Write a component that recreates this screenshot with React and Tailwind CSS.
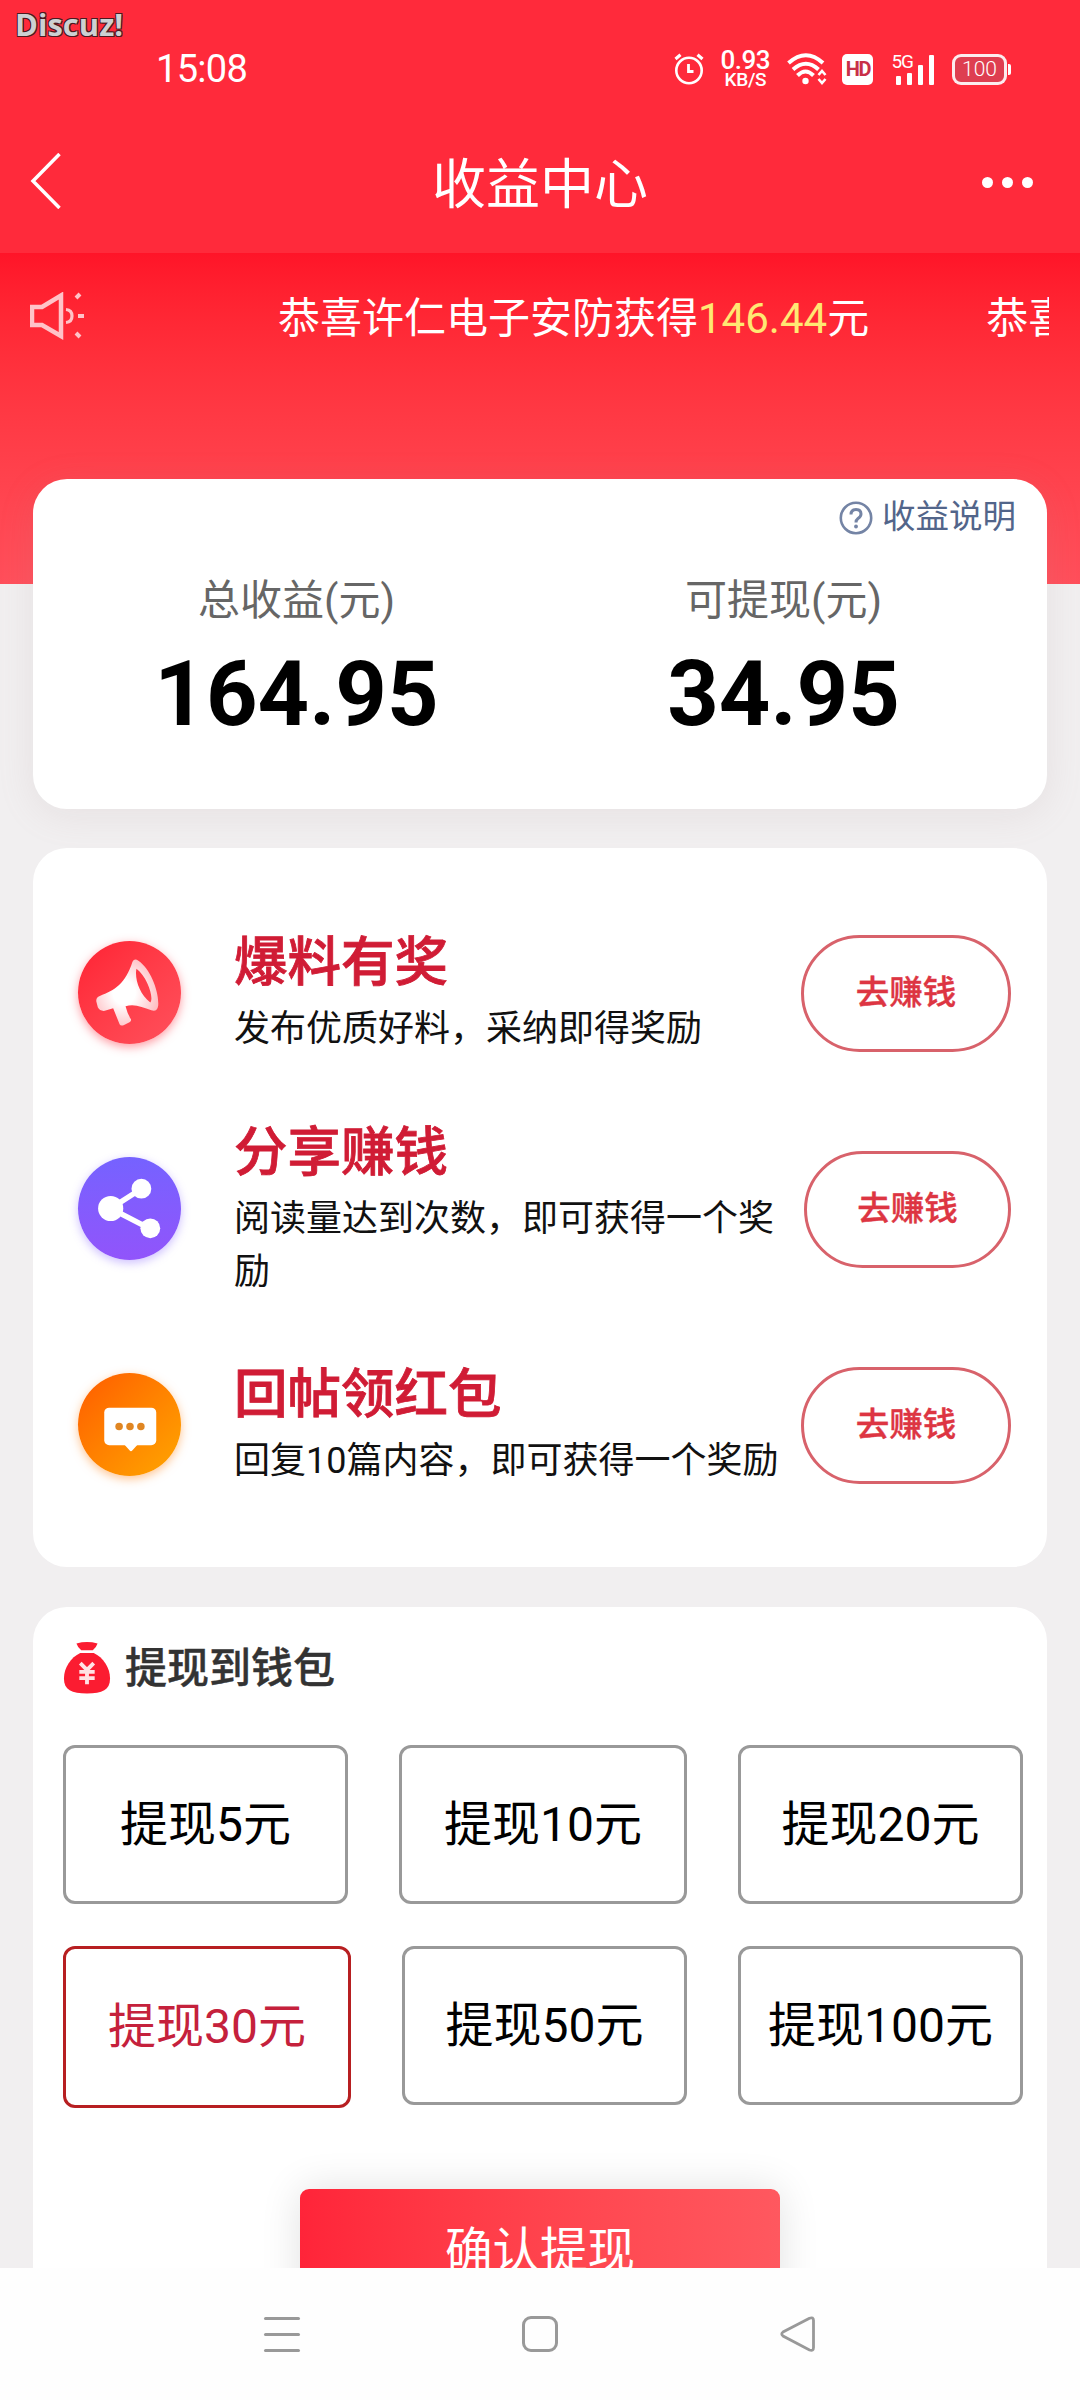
const tasks = [
  { id: 'news', icon: MegaphoneIcon, title: '爆料有奖', desc: '发布优质好料，采纳即得奖励' },
  { id: 'share', icon: ShareIcon, title: '分享赚钱', desc: '阅读量达到次数，即可获得一个奖励' },
  { id: 'reply', icon: ChatIcon, title: '回帖领红包', desc: '回复10篇内容，即可获得一个奖励' },
]

const amountRows = [
  [
    { value: 5, size: 'w-[285px] h-[159px]' },
    { value: 10, size: 'w-[288px] h-[159px]' },
    { value: 20, size: 'w-[285px] h-[159px]' },
  ],
  [
    { value: 30, size: 'w-[288px] h-[162px]' },
    { value: 50, size: 'w-[285px] h-[159px]' },
    { value: 100, size: 'w-[285px] h-[159px]' },
  ],
]

function MegaphoneIcon() {
  return (
    <div className="size-[103px] rounded-full bg-linear-to-br from-[#ff2033] to-[#ff505c] shadow-[0_3px_10px_rgba(255,60,75,0.5)]">
      <svg viewBox="0 0 104 104" className="size-full">
        <defs>
          <radialGradient id="horn" cx="0.45" cy="0.5" r="0.6">
            <stop offset="0.3" stopColor="#fff" />
            <stop offset="1" stopColor="#ffb9be" />
          </radialGradient>
        </defs>
        <path
          fill="url(#horn)"
          fillRule="evenodd"
          d="M55 21 Q57 17 61 20 C73 28 82 51 81 65 Q80 72 74 70 C65 67 57 63 48 66 Q50 74 53.500 79 Q54 81 52 82 L46 85 Q43 86 42 84 L35.500 68 L27 70.500 Q22 71 20 67 L18.500 61 Q18 57 22 55.500 C37 50 48 43 55 21 Z M59 28 C57 38 62 54 73 62 C77 58 70 36 59 28 Z"
        />
      </svg>
    </div>
  )
}

function ShareIcon() {
  return (
    <div className="size-[103px] rounded-full bg-linear-to-b from-[#7562ff] to-[#9154fb] shadow-[0_3px_10px_rgba(130,95,255,0.4)]">
      <svg viewBox="0 0 104 104" className="size-full" fill="#fff">
        <path d="M64 32 L33 52 L72 72" fill="none" stroke="#fff" strokeWidth="5.500" />
        <circle cx="33" cy="52" r="12.700" />
        <circle cx="64" cy="32" r="10" />
        <circle cx="73" cy="72" r="10" />
      </svg>
    </div>
  )
}

function ChatIcon() {
  return (
    <div className="size-[103px] rounded-full bg-linear-to-br from-[#ff5a00] to-[#ffa500] shadow-[0_3px_10px_rgba(255,140,40,0.5)]">
      <svg viewBox="0 0 104 104" className="size-full">
        <rect x="26.500" y="35" width="52.500" height="38" rx="5" fill="#fff" />
        <path d="M46.500 72 L52 78 Q53.500 80 55 78 L60.500 72 Z" fill="#fff" />
        <g fill="#e08622">
          <circle cx="41.500" cy="54" r="3.800" />
          <circle cx="52.500" cy="54" r="3.800" />
          <circle cx="63.500" cy="54" r="3.800" />
        </g>
      </svg>
    </div>
  )
}

function StatusBar() {
  return (
    <div className="flex h-[114px] items-center justify-between pt-6 pr-[69px] pl-[156px] text-white">
      <span className="text-[38px] leading-none tracking-[-0.7px]">15:08</span>
      <div className="flex h-[36px] items-center">
        {/* alarm */}
        <svg width="30" height="32" viewBox="0 0 30 32" fill="none" stroke="#fff" strokeWidth="2.600">
          <circle cx="15" cy="17.500" r="12.700" />
          <path d="M14.500 11 V18.500 H19.500" strokeWidth="2.800" />
          <path d="M1.500 6 L6.500 1.800 M23.500 1.800 L28.500 6" strokeWidth="3.200" />
        </svg>
        <div className="ml-[16px] flex w-[50px] flex-col items-center font-medium">
          <span className="text-[26px] leading-[22px] tracking-[-0.5px]">0.93</span>
          <span className="text-[19px] leading-[18px] tracking-[-0.3px]">KB/S</span>
        </div>
        {/* wifi */}
        <svg className="ml-[17px]" width="40" height="32" viewBox="0 0 40 32" fill="none" stroke="#fff">
          <path d="M1.500 10 Q19 -5.500 36 10" strokeWidth="4" />
          <path d="M6 16.500 Q19 5 31.500 16.500" strokeWidth="4" />
          <path d="M10.500 22.500 Q18.500 14.500 26.500 22.500" strokeWidth="4" />
          <circle cx="18.500" cy="28" r="3.200" fill="#fff" stroke="none" />
          <path d="M31.500 22 L35 18 L38.500 22 M31.500 26 L35 30 L38.500 26" strokeWidth="2.600" />
        </svg>
        <div className="ml-[15px] flex size-[31px] items-center justify-center rounded-[5px] bg-white text-[20px] leading-none font-bold tracking-[-1.500px] text-[#c83048]">
          HD
        </div>
        <div className="ml-[18px] flex h-[31px] items-end">
          <span className="-mr-[17px] self-start text-[19px] leading-[15px] tracking-[-1px]">5G</span>
          <div className="flex items-end gap-[6px]">
            <i className="h-[9px] w-[5px] rounded-[1px] bg-white" />
            <i className="h-[12px] w-[5px] rounded-[1px] bg-white" />
            <i className="h-[20px] w-[5px] rounded-[1px] bg-white" />
            <i className="h-[30px] w-[5px] rounded-[1px] bg-white" />
          </div>
        </div>
        <div className="ml-[18px] flex h-[31px] w-[55px] items-center justify-center rounded-[9px] border-3 border-white/90 bg-[#de3e50] text-[21px] leading-none font-light text-white">
          100
        </div>
        <i className="ml-px h-[11px] w-[3px] rounded-r-[2px] bg-white" />
      </div>
    </div>
  )
}

function TitleBar() {
  return (
    <div className="flex h-[139px] items-center justify-between pr-[47px] pl-[30px]">
      <svg className="mb-[6px]" width="77" height="56" viewBox="0 0 77 56" fill="none" stroke="#fff" strokeWidth="3.500">
        <path d="M29.500 1 L3 28 L29.500 55" />
      </svg>
      <h1 className="pt-[5px] text-[54px] leading-[80px] text-white">收益中心</h1>
      <div className="mb-[3px] flex w-[60px] justify-end gap-[9px]">
        <i className="size-[11px] rounded-full bg-white" />
        <i className="size-[11px] rounded-full bg-white" />
        <i className="size-[11px] rounded-full bg-white" />
      </div>
    </div>
  )
}

function Marquee() {
  return (
    <div className="flex h-[128px] items-center pr-[31px] pl-[30px]">
      <svg className="mb-[3px] shrink-0" width="55" height="48" viewBox="0 0 55 48" fill="none" stroke="#ffc3c8" strokeWidth="3.200">
        <path d="M2 15 H12 L31 3.500 V44 L12 33 H2 Z" strokeWidth="4.500" />
        <path d="M36 17.500 Q42 18 42 24 Q42 30 36 30.500" />
        <path d="M46 6 L50 2 M48 24 H54 M46 41 L50 45" strokeWidth="4" />
      </svg>
      <div className="ml-[193px] flex flex-1 gap-[117px] overflow-hidden pt-[3px] text-[42px] leading-[62px] whitespace-nowrap text-white">
        <span className="shrink-0">
          恭喜许仁电子安防获得<span className="text-[#ffe873]">146.44</span>元
        </span>
        <span>恭喜</span>
      </div>
    </div>
  )
}

function Balance({ label, value }) {
  return (
    <div className="flex flex-1 flex-col items-center">
      <span className="text-[42px] leading-[60px] text-[#666]">{label}</span>
      <span className="mt-[9px] text-[90px] leading-[110px] font-bold text-black">{value}</span>
    </div>
  )
}

function MoneyBag() {
  return (
    <svg width="48" height="54" viewBox="0 0 50 56">
      <path d="M14 2.500 Q25 -0.500 36 2.500 Q35 6 31 9.500 H19 Q15 6 14 2.500 Z" fill="#fb1c31" />
      <path d="M18 12.500 H32 C42 17 49 28 49 39 C49 51 41 54.500 25 54.500 C9 54.500 1 51 1 39 C1 28 8 17 18 12.500 Z" fill="#fb1c31" />
      <path d="M18 23 L25 30 L32 23 M25 30 V45 M17 32 H33 M17 38.500 H33" fill="none" stroke="#ffe3e5" strokeWidth="4" />
    </svg>
  )
}

function NavBar() {
  return (
    <nav className="flex h-[132px] shrink-0 items-center justify-between bg-[#fefefe] px-[264px]">
      <div className="flex w-9 flex-col gap-[13px]">
        <i className="h-[3px] rounded-full bg-[#999]" />
        <i className="h-[3px] rounded-full bg-[#999]" />
        <i className="h-[3px] rounded-full bg-[#999]" />
      </div>
      <div className="size-9 rounded-[9px] border-3 border-[#999]" />
      <svg width="36" height="36" viewBox="0 0 36 36" fill="none" stroke="#999" strokeWidth="2.800">
        <path d="M29.500 2.200 L3 16 Q0.500 18 3 20 L29.500 34 Q33.500 35.500 33.500 31.500 V4.500 Q33.500 0.800 29.500 2.200 Z" />
      </svg>
    </nav>
  )
}

export default function App() {
  return (
    <div className="relative flex h-[2400px] w-[1080px] flex-col overflow-hidden bg-[#f1eff0] font-['Roboto','Noto_Sans_CJK_SC',sans-serif]">
      <span className="absolute top-[3px] left-[15px] font-['Open_Sans',sans-serif] text-[31px] leading-[42px] font-bold text-[#cdd0d2] [text-shadow:1px_1px_0_#4a1a20,-1px_-1px_0_#4a1a20,1px_-1px_0_#4a1a20,-1px_1px_0_#4a1a20]">
        Discuz!
      </span>

      <header className="h-[253px] shrink-0 bg-[#ff2a3b]">
        <StatusBar />
        <TitleBar />
      </header>

      <main className="flex min-h-0 flex-1 flex-col overflow-hidden">
        <div className="h-[331px] shrink-0 bg-linear-to-b from-[#ff1428] to-[#ff4f5b]">
          <Marquee />
        </div>

        {/* balance card */}
        <section className="mx-[33px] -mt-[105px] h-[330px] shrink-0 rounded-[34px] bg-white px-5 shadow-[0_6px_36px_rgba(170,140,145,0.14)]">
          <div className="flex h-[76px] items-center justify-end gap-[9px] pr-[11px] text-[33.500px] text-[#52658a]">
            <svg className="mt-[2px]" width="34" height="34" viewBox="0 0 34 34" fill="none" stroke="#7484a5" strokeWidth="2.600">
              <circle cx="17" cy="17" r="15.200" />
              <path d="M12 13.500 Q12 8.500 17 8.500 Q22 8.500 22 13 Q22 15.500 19 17.500 Q17 19 17 21.500" strokeWidth="3" />
              <circle cx="17" cy="25.500" r="1.900" fill="#7484a5" stroke="none" />
            </svg>
            收益说明
          </div>
          <div className="flex pt-[16px]">
            <Balance label="总收益(元)" value="164.95" />
            <Balance label="可提现(元)" value="34.95" />
          </div>
        </section>

        {/* task list */}
        <section className="mx-[33px] mt-[39px] h-[719px] shrink-0 rounded-[34px] bg-white pt-9 pl-[45px]">
          {tasks.map(({ id, icon: Icon, title, desc }) => (
            <div key={id} className="flex h-[216px] items-center">
              <Icon />
              <div className="ml-[53px] w-[547px] pb-1">
                <h2 className="text-[53.500px] leading-[80px] font-medium text-[#d01c35] [-webkit-text-stroke:0.8px_#d01c35]">{title}</h2>
                <p className="text-[36px] leading-[53.500px] text-[#111]">{desc}</p>
              </div>
              <button
                className={`mt-[2px] mr-[36px] ml-auto flex h-[117px] shrink-0 items-center justify-center rounded-full border-3 border-[#d8626b] text-[33.500px] font-medium text-[#dd3542] [-webkit-text-stroke:0.4px_#dd3542] ${
                  id === 'share' ? 'w-[207px]' : 'w-[210px]'
                }`}
              >
                去赚钱
              </button>
            </div>
          ))}
        </section>

        {/* withdraw */}
        <section className="mx-[33px] mt-10 h-[780px] shrink-0 rounded-t-[34px] bg-white px-[30px] pt-[32px]">
          <div className="flex h-[58px] items-center">
            <MoneyBag />
            <h3 className="mt-[2px] ml-[14px] text-[42px] leading-none font-medium text-[#333] [-webkit-text-stroke:0.4px_#333]">提现到钱包</h3>
          </div>
          <div className="mt-[48px] flex flex-col gap-[42px]">
            {amountRows.map((row, i) => (
              <div key={i} className="flex items-start gap-[51px]">
                {row.map(({ value, size }) => (
                  <button
                    key={value}
                    className={`flex shrink-0 items-center justify-center rounded-xl border-3 text-[48px] leading-none whitespace-nowrap ${size} ${
                      value === 30 ? 'border-[#b71f21] text-[#c5213c]' : 'border-[#999] text-black'
                    }`}
                  >
                    提现{value}元
                  </button>
                ))}
              </div>
            ))}
          </div>
          <button className="mx-auto mt-[81px] flex h-[120px] w-[480px] items-center justify-center rounded-[9px] bg-linear-to-r from-[#ff2439] to-[#ff585f] pt-[6px] text-[47.500px] leading-none text-white shadow-[0_0_40px_rgba(0,0,0,0.12)]">
            确认提现
          </button>
        </section>
      </main>

      <NavBar />
    </div>
  )
}
